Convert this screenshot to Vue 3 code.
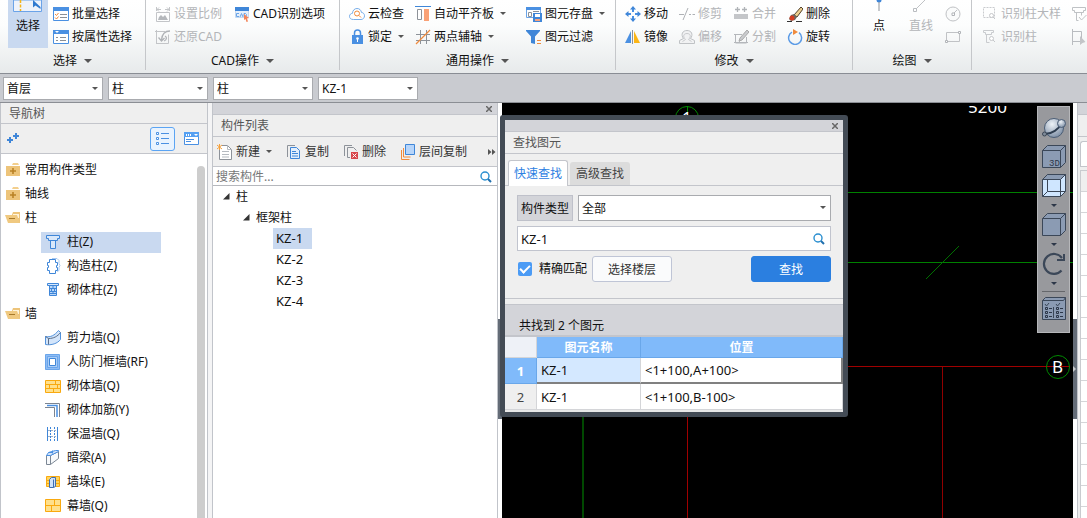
<script setup>
import { ref } from 'vue'

const icons = {
  bigSelect: `<path d="M.5 0v11.500h28V0z" fill="#eef2fa" stroke="#6ba3e8"/><path d="M7.500 0v11" stroke="#f5b418" stroke-width="1.500" stroke-dasharray="3 1.500"/><path d="M20 0v7.500l2.500-2 5 3.500V7z" fill="#2f79cf"/>`,
  batch: `<path d="M.5 1.500h15v13H.5z" fill="#fff" stroke="#4a90e2"/><path d="M0 1h16v4H0z" fill="#4a90e2"/><path d="M2 8l1.500 1.500L5.500 7M2 11.500L3.500 13l2-2.500" stroke="#f08a3c" fill="none"/><path d="M7 8.500h7M7 11.500h7" stroke="#8a8f96"/>`,
  prop: `<path d="M.5 1.500h15v13H.5z" fill="#fff" stroke="#4a90e2"/><path d="M0 1h16v4H0z" fill="#4a90e2"/><path d="M2 2h4L4 4z" fill="#fff"/><path d="M3 8.500h2M3 11.500h2M7 8.500h6M7 11.500h6" stroke="#8a8f96"/>`,
  scale: `<path d="M1.500 1v4M14.500 1v4M2 3.500h4M10 3.500h4M4 1.500l-2 2 2 2M12 1.500l2 2-2 2M1.500 6.500h13v9h-13z" fill="none" stroke="#c3c5c8"/><path d="M3 14l1-3 2-2 2 2 2-2 3 5z" fill="#b5b8bc"/>`,
  restore: `<path d="M1.500 1v14M0 2.500h10M1.500 14.500h12v-9" fill="none" stroke="#c3c5c8"/><path d="M15 2C10 2 7 5 6.500 11M3.500 8.500l3 3.500L9.500 9M9 12c3-1 3-4 1-5" fill="none" stroke="#b0b3b7" stroke-width="1.300"/>`,
  cadopt: `<path d="M1.500 1.500h13v10h-13z" fill="#e6f0fb" stroke="#c5d9f0"/><path d="M1 1h14v4H1z" fill="#3f86d8"/><path d="M5 7.500H2.500v3H5M6 11l1.500-3.500L9 11M10 7.500h1.500l1 1v1l-1 1H10z" fill="none" stroke="#6aa5e8"/><path d="M10 8l5 4-2 .5 1 3-1.500.5-1-3-1.500 1z" fill="#f3855a"/>`,
  cloud: `<path d="M4.500 13.500C1.500 13.500.5 12 .5 10.300.5 8.500 2 7.300 3.500 7.300 3.500 4.500 5.500 2.500 8 2.500s4 1.500 4.500 4c2 0 3 1.700 3 3.300 0 2-1.500 3.700-3.500 3.700z" fill="#fff" stroke="#79aee9"/><circle cx="8" cy="7.500" r="2.500" fill="none" stroke="#f08a3c"/><path d="M10 9.500l2 2" stroke="#f08a3c"/>`,
  lock: `<path d="M3 6h11v9H3z" fill="#4a90e2"/><path d="M5.500 6V4a3 3 0 016 0v2" fill="none" stroke="#4a90e2" stroke-width="1.500"/><circle cx="8.500" cy="9.500" r="1.300" fill="#fff"/><path d="M8.500 10v3" stroke="#fff"/>`,
  align: `<path d="M0 .5h16" stroke="#3f86d8"/><path d="M2.500 3.500h4v10h-4z" fill="#fff" stroke="#8d9299"/><path d="M9 3h5v12H9z" fill="#f9a176"/>`,
  axis: `<path d="M1 5.500h14M1 11.500h14M5.500 1v14M11.500 1v14" stroke="#8d9299"/><path d="M1 15L15 1" stroke="#f08a3c" stroke-width="1.300"/>`,
  save: `<path d="M.5 1.500h14v10H.5z" fill="#fff" stroke="#6aa3e6"/><path d="M0 1h15v3H0z" fill="#4a90e2"/><path d="M2.500 6.500h3v4h-3zM7 5.500h6" fill="none" stroke="#8d9299"/><path d="M7 7h9v9H7z" fill="#3f86d8"/><path d="M9 8h5v3H9z" fill="#fff"/><path d="M9 13h5v2H9z" fill="#f6a27c"/>`,
  filter: `<path d="M0 1h14v1L9 7.500V15l-4-1V7.500L0 2z" fill="#3f86d8"/><path d="M11 11.500h4M11 14.500h4" stroke="#f08a3c"/>`,
  move: `<path d="M8 3v3M8 10v3M3 8h3M10 8h3" stroke="#4a90e2" stroke-width="2"/><path d="M8 0l3 3.500H5zM8 16l3-3.500H5zM0 8l3.500-3v6zM16 8l-3.500-3v6z" fill="#3f86d8"/>`,
  mirror: `<path d="M6 2v12H0z" fill="#4a90e2"/><path d="M9 2v12h6z" fill="#fbb516"/><path d="M7.500 1v14" stroke="#8d9299"/>`,
  trim: `<path d="M0 8.500h5M10 8.500h2M13.500 8.500h2.500M4 14L9 2" stroke="#aeb1b5"/>`,
  offset: `<path d="M.5 14.500v-3l4-2c-3-4-1-8 3.500-8s6.500 4 3.500 8l4 2v3z" fill="#f1f2f3" stroke="#bfc2c5"/><path d="M3.500 12.500l3-2c-3-3-2-6 1.500-6s4.500 3 1.500 6l3 2" fill="none" stroke="#c8cacd"/>`,
  merge: `<path d="M1 8h14v5H1z" fill="#c4c6c9"/><path d="M4.500 1v5M2 3.500h5M11.500 1v5M9 3.500h5" stroke="#b0b3b7" stroke-width="1.300"/>`,
  split: `<path d="M2.500 5v9h11V8M1 5.500h8M1 13.500h14M6 13l8-11" stroke="#b4b7bb" fill="none"/><path d="M7 9l7-8 2 2-7 8-3 1z" fill="#c9cbce" stroke="#aaa"/>`,
  brush: `<path d="M7 9L14 1l2 2-6 8z" fill="#eed08e" stroke="#51402c"/><path d="M4 9l3-1 3 3-2 3-4 1-2-2z" fill="#6d675f"/><circle cx="5" cy="12" r="2.500" fill="#d43e22"/><path d="M0 15.500h5M9 15.500h6" stroke="#333"/>`,
  rotate: `<path d="M5 3.200a6.500 6.500 0 107 .5" fill="none" stroke="#5b9be6" stroke-width="1.500"/><path d="M6 0l5 3-5 3z" fill="#f08a3c"/>`,
  point: `<circle cx="8" cy="0" r="2.500" fill="#3f86d8"/><path d="M8 2v9" stroke="#8d9299"/>`,
  line: `<path d="M3 9L12 0" stroke="#c0c2c5"/><path d="M.5 8.500h3v3h-3z" fill="#fff" stroke="#b9bcc0"/>`,
  circle: `<circle cx="8" cy="8" r="7" fill="#fafbfb" stroke="#c0c2c5"/><path d="M8 8l4-4" stroke="#c0c2c5"/><path d="M7 7h2.500v2.500H7z" fill="#fff" stroke="#b0b3b7"/>`,
  rect: `<path d="M1.500 3.500h13v9h-13z" fill="none" stroke="#c0c2c5"/><path d="M.5 11.500h2v2h-2zM13.500 2.500h2v2h-2z" fill="#fff" stroke="#b0b3b7"/>`,
  recogBig: `<path d="M1.500 1.500h11v10h-11z" fill="none" stroke="#c9cbce" stroke-dasharray="2 1"/><circle cx="9.500" cy="9.500" r="2" fill="#fff" stroke="#c6c8cb"/><path d="M11 11l2 2" stroke="#c6c8cb"/>`,
  recog: `<path d="M1.500 1.500h10v2h-2v2h-6v-2h-2zM4.500 5.500v8h3" fill="none" stroke="#c9cbce"/><circle cx="9.500" cy="9.500" r="2" fill="#fff" stroke="#c6c8cb"/><path d="M11 11l2 2" stroke="#c6c8cb"/>`,
  colCheck: `<path d="M1.500 1.500h13v3h-2v2h-9v-2h-2zM5.500 6.500v8h2M10.500 6.500v3M8 11l2.500 3 5-5" fill="none" stroke="#bfc2c5"/>`,
  colPick: `<path d="M1.500 0v16M1.500 2.500h9v10h-9" fill="none" stroke="#b9bcc0"/><path d="M9 7v9l2.500-2 3-1z" fill="#c3c5c8"/>`,
  folderPlus: `<path d="M7 3l1-2h5l1 2z" fill="#f3cf8d"/><path d="M1 4h14v10H1z" fill="#edc47a"/><path d="M8 6v6M5 9h6" stroke="#b98226" stroke-width="1.600"/>`,
  folderOpen: `<path d="M8 2h7v11H4z" fill="#edc47a"/><path d="M8 4h6v4H8z" fill="#fff4dd"/><path d="M0 5h12l3 8H3z" fill="#f0c980"/><path d="M4 8.500h6" stroke="#a8792a"/>`,
  column: `<path d="M1.500 1.500h13v3h-2v2h-9v-2h-2zM5.500 6.500v8h5v-8" fill="#d9e8fa" stroke="#3f86d8"/>`,
  ctor: `<path d="M7 .5h5l2 2v3l1 2-1 2v3l-2 1" fill="none" stroke="#a7c9f2"/><path d="M4.500 1.500h6v3h2v3h-1v2h1v3h-2v3h-6v-3h-2v-3h1v-2h-1v-3h2z" fill="#fff" stroke="#3f86d8"/>`,
  brickCol: `<path d="M2.500 1.500h11v2h-11z" fill="#d9e8fa" stroke="#3f86d8"/><path d="M4.500 3.500h7v10h-7z" fill="#b9d6f8" stroke="#3f86d8"/><path d="M4 6.500h8M4 9.500h8M4 11.500h8M8 3v3M6.500 6v3M9.500 6v3M8 9v3" stroke="#3f86d8"/>`,
  shear: `<path d="M.5 6.500c5 1 9-1 13-6l2 2v7c-3 4-9 6-15 5z" fill="#d3e5fb" stroke="#5292dc"/><path d="M.5 6.500l3 2v6M3.500 8.500c5 0 9-2 12-6" fill="none" stroke="#5b6e88"/>`,
  frame: `<path d="M.5.500h14v15H.5z" fill="#8dbcf5" stroke="#6aa5ea"/><path d="M2.500 2.500h10v11h-10z" fill="#a9cdf8" stroke="#6aa5ea"/><path d="M4.500 4.500h6v7h-6z" fill="#fff" stroke="#3f86d8"/>`,
  brick: `<path d="M.5 2.500h15v12H.5z" fill="#ffe08c" stroke="#f9a90f"/><path d="M0 6.500h16M0 10.500h16M10.500 2v4M4.500 6v4M12.500 6v4M8.500 10v4" stroke="#f9a90f"/>`,
  rebar: `<path d="M0 1.500h14.500V15M0 5.500h9.500V15" fill="none" stroke="#7c8490"/><path d="M2 3.500h10V15" fill="none" stroke="#4a90e2" stroke-width="1.500"/>`,
  insul: `<path d="M2.500 1v14M12.500 1v14" stroke="#3f86d8"/><path d="M5.500 1v14M9.500 1v14" stroke="#3f86d8" stroke-dasharray="2 1"/><path d="M3 4.500h9M3 10.500h9" stroke="#9fb2c9" stroke-dasharray="2 1"/>`,
  beam: `<path d="M1.500 5.500h4v9h-4zM5.500 5.500l8-4v7l-8 6" fill="#f7f9fb" stroke="#7c8794"/><path d="M1.500 5.500l2-3 7-2h3v1l-8 4zM3.500 2.500h4M7.500.500v3" fill="#cfe2fa" stroke="#4a90e2"/>`,
  pier: `<path d="M1.500 2.500h13v10h-13z" fill="#ffd45e" stroke="#f9a90f"/><path d="M1 6.500h14M1 9.500h14" stroke="#f9a90f"/><path d="M4.500 5.500l2-2h4v9l-2 1h-4zM8.500 5.500v8" fill="#cfe2fa" stroke="#3f6fb0"/>`,
  curtain: `<path d="M.5 1.500h15v12H.5z" fill="#ffe08c" stroke="#f9a90f"/><path d="M0 7.500h16M9.500 1v6M6.500 7v6" stroke="#f9a90f"/>`,
  newDoc: `<path d="M5 1.500h5.500l4 4v10H2.500V6" fill="#fff" stroke="#8d9299"/><path d="M10.500 1.500v4h4M5 7.500h7M5 10.500h7M5 13h7" fill="none" stroke="#b5bac0"/><path d="M0 1l5 4M5 1L0 5M2.500 0v6" stroke="#f5a03a"/>`,
  copy: `<path d="M1.500 13V1.500H9" fill="none" stroke="#8d9299"/><path d="M4.500 3.500h6l3 3v8h-9z" fill="#e4effc" stroke="#3f86d8"/><path d="M6 7.500h4M6 9.500h6M6 12h6" stroke="#3f86d8"/>`,
  del: `<path d="M1.500 12V1.500H9M7 13.500H4.500v-10h6l3 3" fill="none" stroke="#8d9299"/><path d="M8 8h7v7H8z" fill="#d8474c"/><path d="M9.500 9.500l4 4M13.500 9.500l-4 4" stroke="#fff"/>`,
  layerCopy: `<path d="M1.500 6v9.500h8M3.500 4v9h7" fill="none" stroke="#f08a3c"/><path d="M5.500.500h9v10h-9z" fill="#b7d5fa" stroke="#3f86d8"/>`,
  search: `<circle cx="6" cy="6" r="4" fill="none" stroke="#2a8fd0" stroke-width="1.400"/><path d="M9 9l3 3" stroke="#1f6fae" stroke-width="2"/>`,
  orbit: `<circle cx="12" cy="12" r="9.500" fill="url(#ball)" stroke="#4b5d75"/><path d="M3 18C10 18 17 13 19 8" fill="none" stroke="#2e3d50" stroke-width="2"/><circle cx="19.500" cy="7.500" r="4" fill="url(#ball)" stroke="#4b5d75"/><circle cx="2.500" cy="18" r="2" fill="#7f8b99" stroke="#3a4656"/>`,
  cube3d: `<path d="M.5 5.500l5-5h18v17l-5 5H.5z" fill="#8b9bb3" stroke="#3b4758"/><path d="M.5 5.500h18v17M18.500 5.500l5-5" fill="none" stroke="#3b4758"/><text x="7" y="21" font-size="9" font-family="Liberation Mono, monospace" fill="#2c3748">3D</text>`,
  cubeWire: `<path d="M.5 5.500l5-5h18v17l-5 5H.5z" fill="#cfe6ff" stroke="#3b4758"/><path d="M.5 5.500l5-5h18l-5 5z" fill="#8b9bb3"/><path d="M.5 5.500h18v17M18.500 5.500l5-5M.5 5.500l5-5h18M5.500 5v12.500h18M5.500 17.500l-5 5" fill="none" stroke="#3b4758"/>`,
  cube: `<path d="M.5 5.500l5-5h18v17l-5 5H.5z" fill="#8b9bb3" stroke="#3b4758"/><path d="M.5 5.500h18v17M18.500 5.500l5-5" fill="none" stroke="#3b4758"/>`,
  turn: `<path d="M19.500 18.500A10 10 0 1120 6" fill="none" stroke="#3b4758" stroke-width="2.200"/><path d="M15 8h7V2" fill="none" stroke="#3b4758" stroke-width="2"/>`,
  checklist: `<path d="M.5 3.500l3-3h20v22H.5z" fill="#8b9bb3" stroke="#3b4758"/><path d="M.5 3.500h21l2-3M11.500 10v11M3 7l1.500 2L7 6M14 7l1.500 2L18 6" fill="none" stroke="#3b4758"/><path d="M3.500 10.500h2v2h-2zM3.500 14.500h2v2h-2zM3.500 18.500h2v2h-2zM14.500 10.500h2v2h-2zM14.500 14.500h2v2h-2zM14.500 18.500h2v2h-2zM7 11.500h3M7 15.500h3M7 19.500h3M18 11.500h3M18 15.500h3M18 19.500h3" fill="none" stroke="#2c3748"/>`
}

const edit = [
  ['move', '移动'], ['trim', '修剪', 1], ['merge', '合并', 1], ['brush', '删除'],
  ['mirror', '镜像'], ['offset', '偏移', 1], ['split', '分割', 1], ['rotate', '旋转']
]
const filters = [
  { label: '楼层', value: '首层' }, { label: '类别', value: '柱' },
  { label: '类型', value: '柱' }, { label: '构件', value: 'KZ-1' }
]
const nav = [
  ['folderPlus', '常用构件类型', 0], ['folderPlus', '轴线', 0], ['folderOpen', '柱', 0],
  ['column', '柱(Z)', 1], ['ctor', '构造柱(Z)', 1], ['brickCol', '砌体柱(Z)', 1],
  ['folderOpen', '墙', 0], ['shear', '剪力墙(Q)', 1], ['frame', '人防门框墙(RF)', 1],
  ['brick', '砌体墙(Q)', 1], ['rebar', '砌体加筋(Y)', 1], ['insul', '保温墙(Q)', 1],
  ['beam', '暗梁(A)', 1], ['pier', '墙垛(E)', 1], ['curtain', '幕墙(Q)', 1]
]
const activeNav = ref(3)
const members = ['KZ-1', 'KZ-2', 'KZ-3', 'KZ-4']
const activeMember = ref('KZ-1')
const keyword = ref('KZ-1')
const exact = ref(true)
const results = [['KZ-1', '<1+100,A+100>'], ['KZ-1', '<1+100,B-100>']]
</script>

<template>
  <div class="app">
    <svg class="defs" width="0" height="0" aria-hidden="true">
      <radialGradient id="ball" cx=".4" cy=".3" r=".8"><stop offset="0" stop-color="#eef3f8" /><stop offset="1" stop-color="#70839c" /></radialGradient>
    </svg>

    <header class="ribbon">
      <section class="group g-select">
        <div class="body">
          <button class="big on"><svg width="30" height="12" v-html="icons.bigSelect"></svg><span>选择</span></button>
          <div class="stack">
            <button class="tool"><svg class="i" v-html="icons.batch"></svg>批量选择</button>
            <button class="tool"><svg class="i" v-html="icons.prop"></svg>按属性选择</button>
          </div>
        </div>
        <button class="caption">选择<i class="caret wide"></i></button>
      </section>
      <section class="group g-cad">
        <div class="body">
          <div class="stack first">
            <button class="tool off" disabled><svg class="i" v-html="icons.scale"></svg>设置比例</button>
            <button class="tool off" disabled><svg class="i" v-html="icons.restore"></svg>还原CAD</button>
          </div>
          <div class="stack">
            <button class="tool"><svg class="i" v-html="icons.cadopt"></svg>CAD识别选项</button>
          </div>
        </div>
        <button class="caption">CAD操作<i class="caret wide"></i></button>
      </section>
      <section class="group g-common">
        <div class="body">
          <div class="stack c1">
            <button class="tool"><svg class="i" v-html="icons.cloud"></svg>云检查</button>
            <button class="tool"><svg class="i" v-html="icons.lock"></svg>锁定<i class="caret"></i></button>
          </div>
          <div class="stack c2">
            <button class="tool"><svg class="i" v-html="icons.align"></svg>自动平齐板<i class="caret"></i></button>
            <button class="tool"><svg class="i" v-html="icons.axis"></svg>两点辅轴<i class="caret"></i></button>
          </div>
          <div class="stack">
            <button class="tool"><svg class="i" v-html="icons.save"></svg>图元存盘<i class="caret"></i></button>
            <button class="tool"><svg class="i" v-html="icons.filter"></svg>图元过滤</button>
          </div>
        </div>
        <button class="caption">通用操作<i class="caret wide"></i></button>
      </section>
      <section class="group g-edit">
        <div class="body quad">
          <button v-for="e in edit" :key="e[0]" class="tool" :class="{ off: e[2] }" :disabled="!!e[2]"><svg class="i" v-html="icons[e[0]]"></svg>{{ e[1] }}</button>
        </div>
        <button class="caption">修改<i class="caret wide"></i></button>
      </section>
      <section class="group g-draw">
        <div class="body">
          <button class="big"><svg width="16" height="12" v-html="icons.point"></svg><span>点</span></button>
          <button class="big off" disabled><svg width="16" height="12" v-html="icons.line"></svg><span>直线</span></button>
          <div class="stack">
            <button class="tool" aria-label="圆" disabled><svg class="i" v-html="icons.circle"></svg></button>
            <button class="tool" aria-label="矩形" disabled><svg class="i" v-html="icons.rect"></svg></button>
          </div>
        </div>
        <button class="caption">绘图<i class="caret wide"></i></button>
      </section>
      <section class="group g-recog">
        <div class="body">
          <div class="stack r1">
            <button class="tool off" disabled><svg class="i" v-html="icons.recogBig"></svg>识别柱大样</button>
            <button class="tool off" disabled><svg class="i" v-html="icons.recog"></svg>识别柱</button>
          </div>
          <div class="stack">
            <button class="tool off" aria-label="校核柱" disabled><svg class="i" v-html="icons.colCheck"></svg></button>
            <button class="tool off" aria-label="选取柱" disabled><svg class="i" v-html="icons.colPick"></svg></button>
          </div>
        </div>
      </section>
    </header>

    <div class="filters">
      <div v-for="f in filters" :key="f.label" class="pick">
        <select :aria-label="f.label"><option>{{ f.value }}</option></select><i class="caret"></i>
      </div>
    </div>

    <main class="work">
      <aside class="nav">
        <h2 class="title">导航树</h2>
        <div class="navbar">
          <button class="plus" aria-label="展开"><svg width="13" height="11"><path d="M3 4v6M0 7h6M9 0v6M6 3h6" stroke="#3f86d8" stroke-width="2" /></svg></button>
          <button class="view on" aria-label="列表视图"><svg width="14" height="16"><path d="M.5 1.500h2v2h-2zM.5 6.500h2v2h-2zM.5 11.500h2v2h-2z" fill="#fff" stroke="#4a90e2" /><path d="M5 2.500h8M5 7.500h8M5 12.500h8" stroke="#4a90e2" /></svg></button>
          <button class="view" aria-label="面板视图"><svg width="16" height="14"><path d="M.5.500h14v12H.5z" fill="#fff" stroke="#4a90e2" /><path d="M0 0h15v5H0z" fill="#55a0f2" /><path d="M2.500 2v2M4.500 2v2M6.500 2v2" stroke="#fff" /><path d="M10 2h4l-2 2z" fill="#fff" /><path d="M2 7.500h8M2 9.500h5" stroke="#4a90e2" /></svg></button>
        </div>
        <div class="navbody">
          <ul class="tree">
            <li v-for="(n, k) in nav" :key="k">
              <button :class="{ leaf: n[2], sel: k === activeNav }" @click="activeNav = k"><svg class="i" v-html="icons[n[0]]"></svg>{{ n[1] }}</button>
            </li>
          </ul>
          <div class="bar"></div>
        </div>
      </aside>

      <section class="list">
        <div class="grip"><button class="close" aria-label="关闭"><svg width="6" height="6"><path d="M0 0l6 6M6 0L0 6" stroke="#666" stroke-width="1.500" /></svg></button></div>
        <h2 class="title">构件列表</h2>
        <div class="actions">
          <button class="tool"><svg class="i" v-html="icons.newDoc"></svg>新建<i class="caret"></i></button>
          <button class="tool"><svg class="i" v-html="icons.copy"></svg>复制</button>
          <button class="tool"><svg class="i" v-html="icons.del"></svg>删除</button>
          <button class="tool"><svg class="i" v-html="icons.layerCopy"></svg>层间复制</button>
          <button class="more" aria-label="更多"><svg width="8" height="6"><path d="M0 0l3.500 3L0 6zM4 0l3.500 3L4 6z" fill="#555" /></svg></button>
        </div>
        <div class="find"><input type="text" placeholder="搜索构件..." aria-label="搜索构件" /><svg width="13" height="13" v-html="icons.search"></svg></div>
        <ul class="members">
          <li class="l1"><svg width="7" height="7"><path d="M6.500 0v6.500H0z" fill="#333" /></svg>柱</li>
          <li class="l2"><svg width="7" height="7"><path d="M6.500 0v6.500H0z" fill="#333" /></svg>框架柱</li>
          <li v-for="m in members" :key="m" class="l3"><button :class="{ sel: m === activeMember }" @click="activeMember = m">{{ m }}</button></li>
        </ul>
      </section>

      <div class="gutter"><i></i></div>

      <section class="canvas">
        <svg class="drawing" width="100%" height="100%">
          <g fill="none" shape-rendering="crispEdges">
            <path d="M0 89.500H572M0 159.500H572" stroke="#008000" />
            <path d="M81 300V900" stroke="#004800" stroke-width="2" />
            <path d="M185.500 300V900M0 263.500H568" stroke="#a00000" />
            <path d="M440.500 264V900" stroke="#900000" />
          </g>
          <path d="M424 176l33-33" stroke="#007000" />
          <circle cx="185" cy="15" r="11.500" fill="#000" stroke="#008a00" />
          <path d="M185.500 3v6" stroke="#008a00" />
          <text x="180" y="21" class="cad">1</text>
          <circle cx="556" cy="264" r="11.500" fill="none" stroke="#008a00" />
          <text x="550" y="270" class="cad">B</text>
          <text x="466" y="10" class="cad">5200</text>
          <path d="M460 0h60v3h-60z" fill="#000" />
        </svg>
        <div class="viewbar">
          <button aria-label="动态观察"><svg width="24" height="24" v-html="icons.orbit"></svg></button>
          <button aria-label="三维"><svg width="24" height="24" v-html="icons.cube3d"></svg></button>
          <button aria-label="线框"><svg width="24" height="24" v-html="icons.cubeWire"></svg></button>
          <i class="caret"></i>
          <button aria-label="实体"><svg width="24" height="24" v-html="icons.cube"></svg></button>
          <i class="caret"></i>
          <button aria-label="旋转视图"><svg width="24" height="24" v-html="icons.turn"></svg></button>
          <i class="caret"></i>
          <hr />
          <button aria-label="显示设置"><svg width="24" height="24" v-html="icons.checklist"></svg></button>
        </div>

        <div class="dialog" role="dialog" aria-label="查找图元">
          <div class="grip"><button class="close" aria-label="关闭"><svg width="6" height="6"><path d="M0 0l6 6M6 0L0 6" stroke="#666" stroke-width="1.500" /></svg></button></div>
          <h2 class="title">查找图元</h2>
          <div class="tabs"><button class="tab on">快速查找</button><button class="tab">高级查找</button></div>
          <form class="form" @submit.prevent>
            <div class="row">
              <label class="tag" for="kind">构件类型</label>
              <div class="pick"><select id="kind"><option>全部</option></select><i class="caret"></i></div>
            </div>
            <div class="word"><input v-model="keyword" type="text" aria-label="关键字" /><svg width="13" height="13" v-html="icons.search"></svg></div>
            <div class="row">
              <label class="check"><input v-model="exact" type="checkbox" />精确匹配</label>
              <button class="btn" type="button">选择楼层</button>
              <button class="btn primary" type="submit">查找</button>
            </div>
          </form>
          <p class="count">共找到 2 个图元</p>
          <table>
            <thead><tr><th class="no"></th><th class="name">图元名称</th><th>位置</th></tr></thead>
            <tbody>
              <tr v-for="(r, k) in results" :key="k" :class="{ cur: k === 0 }">
                <th class="no" scope="row">{{ k + 1 }}</th><td>{{ r[0] }}</td><td>{{ r[1] }}</td>
              </tr>
            </tbody>
          </table>
        </div>
      </section>

      <div class="gutter right"><i></i></div>
      <aside class="edge"><div class="strip"></div><div class="head"></div><div class="tabtop"></div><div class="cells"></div></aside>
    </main>
  </div>
</template>

<style>
html, body { margin: 0; overflow: hidden; }
</style>

<style scoped>
.app { height: 100vh; display: flex; flex-direction: column; overflow: hidden; background: #c9cbd0; color: #111; font: 12px/20px "Noto Sans", "Noto Sans CJK SC", sans-serif; }
.app * { box-sizing: border-box; }
.defs { position: absolute; }
button, input, select { font: inherit; color: inherit; margin: 0; padding: 0; border: 0; background: none; border-radius: 0; }
button { white-space: nowrap; }
svg { display: block; flex: none; }
.i { width: 16px; height: 16px; }
h2, ul, p { margin: 0; padding: 0; list-style: none; font-weight: normal; font-size: 12px; }
.caret { flex: none; width: 0; height: 0; border: 3px solid transparent; border-top-color: #555; border-bottom: 0; }
.caret.wide { border-width: 4px; border-bottom: 0; }

.ribbon { flex: none; height: 74px; display: flex; background: linear-gradient(#fff, #fcfdfd 35%, #e7eaeb); border-bottom: 1px solid #898d94; overflow: hidden; }
.group { flex: none; display: flex; flex-direction: column; border-right: 1px solid #c5c7ca; margin-bottom: 3px; }
.body { display: flex; height: 50px; }
.stack { padding-top: 2px; }
.tool { display: flex; align-items: center; gap: 3px; height: 23px; }
.tool .caret { margin-left: 3px; }
.off { color: #b3b5b8; }
.caption { display: flex; align-items: center; justify-content: center; gap: 7px; height: 20px; padding-top: 2px; }
.big { width: 40px; height: 48px; display: flex; flex-direction: column; align-items: center; gap: 4px; }
.big.on { background: #c9d9f0; }
.g-select { width: 146px; }
.g-select .body { padding-left: 8px; gap: 5px; }
.g-cad { width: 194px; }
.g-cad .body { padding-left: 9px; }
.g-cad .first { width: 79px; }
.g-common { width: 276px; }
.g-common .body { padding-left: 9px; }
.c1 { width: 66px; }
.c2 { width: 111px; }
.g-edit { width: 237px; }
.quad { display: grid; grid-template-columns: repeat(4, 54px); grid-auto-rows: 23px; padding: 2px 0 0 9px; }
.g-draw { width: 119px; }
.g-draw .body { padding-left: 6px; gap: 2px; }
.g-draw .stack { padding-left: 2px; }
.g-recog { flex: 1 0 auto; border-right: 0; }
.g-recog .body { padding-left: 10px; }
.r1 { width: 89px; }

.filters { flex: none; height: 29px; display: flex; gap: 5px; padding: 3px 3px 2px; border-bottom: 1px solid #8b8e94; }
.pick { position: relative; background: #fff; border: 1px solid #a9abaf; }
.filters .pick { width: 100px; height: 23px; }
.pick select { display: block; width: 100%; height: 100%; padding: 0 16px 0 3px; appearance: none; outline: 0; }
.pick .caret { position: absolute; right: 4px; top: calc(50% - 2px); pointer-events: none; }

.work { flex: 1; min-height: 0; display: flex; }
.title { height: 22px; line-height: 22px; padding-left: 8px; background: #efefef; color: #555; border-bottom: 1px solid #c3c5cb; }
.nav { flex: none; width: 208px; margin-right: 4px; display: flex; flex-direction: column; background: #fff; border: solid #c1c4ca; border-width: 0 1px; box-shadow: 4px 0 #f4f4f5; }
.nav .title { height: 21px; }
.navbar { flex: none; height: 30px; display: flex; align-items: center; padding: 0 3px 0 6px; background: #efefef; border-bottom: 1px solid #c3c5cb; }
.plus { margin-right: auto; }
.view { width: 25px; height: 24px; display: flex; align-items: center; justify-content: center; margin-left: 4px; border: 1px solid transparent; border-radius: 3px; }
.view.on { background: #e9f3fe; border-color: #5ba4f3; }
.navbody { flex: 1; min-height: 0; display: flex; padding: 4px 2px 0 0; }
.tree { flex: 1; overflow: hidden; }
.tree li { height: 24px; display: flex; align-items: center; }
.tree button { height: 21px; display: flex; align-items: center; gap: 4px; margin-left: 4px; }
.tree .leaf { width: 120px; gap: 6px; padding-left: 4px; margin-left: 40px; }
.sel { background: #c9d9f0; }
.bar { width: 8px; margin-top: 8px; background: #cdcdcd; border-radius: 4px 4px 0 0; }

.list { flex: none; width: 286px; background: #fff; border: solid #c1c4ca; border-width: 0 1px; }
.grip { height: 12px; display: flex; align-items: center; justify-content: flex-end; padding-right: 5px; background: #d3d4d9; border-bottom: 1px solid #c3c5cb; }
.actions { height: 30px; display: flex; align-items: center; gap: 14px; padding-left: 4px; background: #efefef; border-bottom: 1px solid #c3c5cb; color: #333; }
.more { margin-left: 7px; }
.find { height: 19px; display: flex; align-items: center; padding: 0 5px 0 3px; border-bottom: 1px solid #b6b8bd; }
.find input, .word input { flex: 1; min-width: 0; height: 100%; outline: 0; }
.find input::placeholder { color: #777; opacity: 1; }
.members li { height: 21px; display: flex; align-items: center; gap: 6px; }
.l1 { padding-left: 10px; }
.l2 { padding-left: 30px; }
.l3 { padding-left: 60px; font-size: 13px; }
.l3 button { width: 39px; height: 21px; text-align: left; padding: 0 0 2px 3px; }

.gutter { flex: none; width: 4px; background: #fff; display: flex; align-items: flex-start; }
.gutter i { width: 4px; height: 100px; margin-top: 216px; background: #646c77; }
.gutter.right i { display: flex; align-items: center; }
.gutter.right i::after { content: ""; border: 3px solid transparent; border-left-color: #c5c8cc; border-right: 0; }

.canvas { flex: 1; min-width: 0; position: relative; background: #000; }
.drawing { position: absolute; inset: 0; }
.cad { font: 17px "Noto Sans", sans-serif; fill: #fff; }
.viewbar { position: absolute; top: 3px; right: 3px; width: 33px; height: 227px; display: flex; flex-direction: column; align-items: center; gap: 5px; padding-top: 9px; background: #98999d; border: 1px solid #b6b7ba; }
.viewbar .caret { margin: 1px 0; border-top-color: #2c3748; }
.viewbar hr { width: 23px; height: 1px; margin: 0; border: 0; background: #65676b; }

.dialog { position: absolute; left: -2px; top: 12px; width: 348px; border: 5px solid #434b55; border-radius: 3px; background: #efefef; }
.tabs { display: flex; align-items: flex-end; gap: 2px; height: 32px; padding-left: 3px; border-bottom: 1px solid #c3c5cb; }
.tab { width: 60px; height: 23px; padding-top: 1px; background: #dcdcdc; color: #444; border-radius: 3px 3px 0 0; }
.tab.on { height: 26px; margin-bottom: -1px; background: #fff; color: #2d80e2; border: 1px solid #c3c5cb; border-bottom: 0; }
.form { display: flex; flex-direction: column; gap: 5px; padding: 9px 12px 16px; border-bottom: 1px solid #c3c5cb; margin-bottom: 5px; }
.row { display: flex; align-items: center; gap: 5px; height: 26px; }
.tag { width: 56px; height: 26px; line-height: 26px; text-align: center; background: #d3d4d9; border: 1px solid #bfc1ca; }
.row .pick { flex: 1; height: 26px; }
.row select { padding-top: 1px; }
.word { height: 25px; display: flex; align-items: center; padding: 0 5px 0 3px; background: #fff; border: 1px solid #c1c4ce; font-size: 13px; }
.check { display: flex; align-items: center; gap: 7px; padding-left: 1px; }
.check input { appearance: none; width: 14px; height: 14px; background: #4b9bf5; border-radius: 2px; display: flex; justify-content: center; }
.check input:checked::after { content: ""; width: 4px; height: 8px; margin-top: 1px; border: solid #fff; border-width: 0 2px 2px 0; transform: rotate(45deg); }
.btn { width: 80px; height: 26px; padding-top: 1px; background: #fafbfc; border: 1px solid #bfc5d6; border-radius: 3px; color: #333; }
.btn.primary { margin-left: auto; background: #2b7fe0; border-color: #2b7fe0; color: #fff; }
.count { height: 33px; padding: 11px 0 0 14px; line-height: 19px; background: #d3d4d9; border: solid #c3c5cb; border-width: 1px 0 2px; }
table { width: 100%; border-collapse: separate; border-spacing: 0; background: #fff; table-layout: fixed; font-size: 13px; border-bottom: 2px solid #e8e8e8; }
th, td { height: 26px; padding: 0 4px; text-align: left; line-height: 18px; border: solid #d4d5d8; border-width: 0 1px 1px 0; }
thead th { height: 21px; padding-top: 2px; text-align: center; font-size: 12px; background: #80bafa; color: #fff; border-color: #69a7ea; }
thead .no { background: #eef1f7; border-color: #d4d5d8; }
th.no { width: 32px; text-align: center; }
th.name { width: 104px; }
tbody .no { background: #efefef; font-weight: normal; color: #444; }
.cur td { border-bottom: 2px solid #808080; }
.cur td:last-child { border-right: 2px solid #808080; }
.cur td:nth-child(2) { background: #d4e8ff; }
tbody .cur .no { background: #80bafa; color: #fff; font-weight: bold; border-color: #69a7ea; }

.edge { flex: none; width: 10px; display: flex; flex-direction: column; background: #efefef; border-left: 1px solid #c1c4ca; }
.strip { flex: none; height: 12px; background: #d3d4d9; border-bottom: 1px solid #c3c5cb; }
.head { flex: none; height: 22px; border-bottom: 1px solid #c3c5cb; }
.tabtop { flex: none; height: 26px; margin: 4px 0 3px 2px; background: #fff; border: solid #c3c5cb; border-width: 1px 0 1px 1px; border-radius: 3px 0 0; }
.cells { flex: 1; margin-left: 2px; border: solid #c9cbcf; border-width: 1px 0 0 1px; background: repeating-linear-gradient(transparent 0 20px, #d4d5d8 20px 21px), linear-gradient(#efefef 20px, #fff 20px); }
</style>
